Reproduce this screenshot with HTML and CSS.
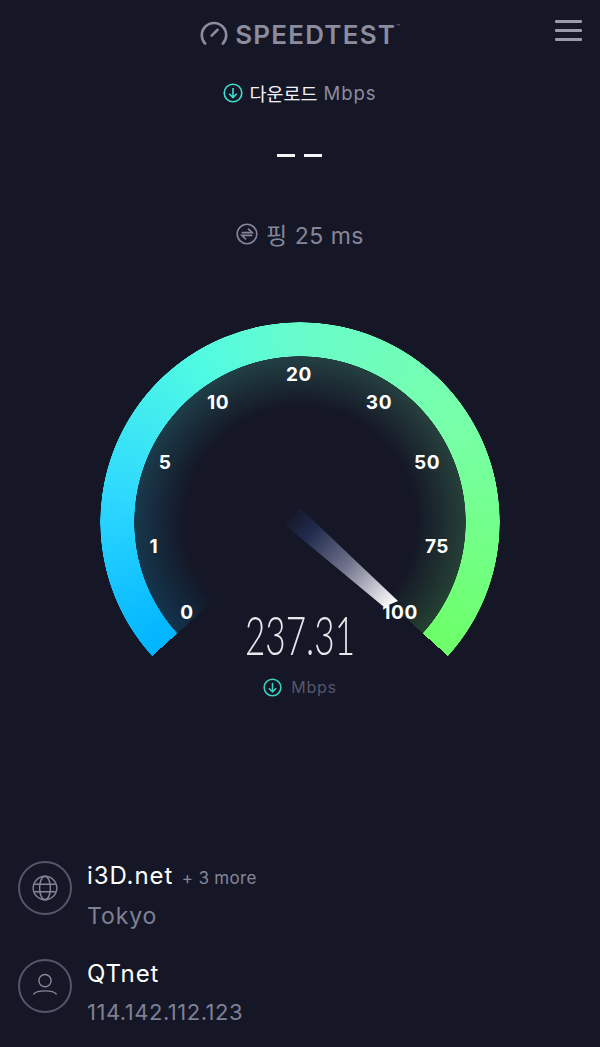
FILE: index.html
```html
<!DOCTYPE html>
<html lang="ko">

<head>
    <meta charset="UTF-8">
    <meta name="viewport" content="width=device-width, initial-scale=1.0">
    <title>Speedtest</title>
    <link rel="stylesheet" href="styles.css">
</head>

<body>

    <!-- Top bar -->
    <header class="topbar">
        <div class="logo">
            <svg class="logo-icon" viewBox="0 0 28 24" width="28" height="24">
                <path d="M5.2 22.6 A12.2 12.2 0 1 1 22.8 22.6" fill="none" stroke="#8b8c9e" stroke-width="2.6" stroke-linecap="round" />
                <path d="M11.6 14.6 L17.6 8.8" fill="none" stroke="#8b8c9e" stroke-width="2.6" stroke-linecap="round" />
            </svg>
            <span class="logo-text">SPEEDTEST</span><span class="logo-tm">™</span>
        </div>
        <div class="menu">
            <span></span>
            <span></span>
            <span></span>
        </div>
    </header>

    <!-- Download value -->
    <div class="result-label">
        <svg viewBox="0 0 20 20" width="20" height="20">
            <circle cx="10" cy="10" r="8.8" fill="none" stroke="#3fe0d0" stroke-width="1.6" />
            <path d="M10 5 V14.4 M6.2 10.8 L10 14.6 L13.8 10.8" fill="none" stroke="#3fe0d0" stroke-width="1.6" />
        </svg>
        <span class="label-white">다운로드</span>
        <span class="label-grey">Mbps</span>
    </div>
    <div class="dashes">
        <span></span>
        <span></span>
    </div>

    <!-- Ping -->
    <div class="ping">
        <svg viewBox="0 0 22 22" width="22" height="22">
            <circle cx="11" cy="11" r="9.8" fill="none" stroke="#85869a" stroke-width="1.6" />
            <path d="M5.6 9.6 H16.2 L12 5.6 M16.4 12.4 H5.8 L10 16.4" fill="none" stroke="#85869a" stroke-width="1.6" />
        </svg>
        <span>핑 25 ms</span>
    </div>

    <!-- Gauge -->
    <div class="gauge">
        <div class="gauge-glow"></div>
        <div class="gauge-arc"></div>
        <svg class="needle" viewBox="0 0 400 400" width="400" height="400">
            <defs>
                <linearGradient id="needleFill" gradientUnits="userSpaceOnUse" x1="190" y1="192" x2="292" y2="284">
                    <stop offset="0" stop-color="#1e2848" stop-opacity="0.1" />
                    <stop offset="0.2" stop-color="#202a4c" />
                    <stop offset="0.55" stop-color="#6d7088" />
                    <stop offset="1" stop-color="#ffffff" />
                </linearGradient>
            </defs>
            <polygon points="185,203 200,186 298,279 284,285" fill="url(#needleFill)" />
        </svg>
        <span class="tick tick-0">0</span>
        <span class="tick tick-1">1</span>
        <span class="tick tick-5">5</span>
        <span class="tick tick-10">10</span>
        <span class="tick tick-20">20</span>
        <span class="tick tick-30">30</span>
        <span class="tick tick-50">50</span>
        <span class="tick tick-75">75</span>
        <span class="tick tick-100">100</span>
        <div class="reading">237.31</div>
        <div class="reading-unit">
            <svg viewBox="0 0 20 20" width="19" height="19">
                <circle cx="10" cy="10" r="8.8" fill="none" stroke="#3fd0c4" stroke-width="1.6" />
                <path d="M10 5 V14.4 M6.2 10.8 L10 14.6 L13.8 10.8" fill="none" stroke="#3fd0c4" stroke-width="1.6" />
            </svg>
            <span>Mbps</span>
        </div>
    </div>

    <!-- Server and provider -->
    <section class="info">
        <div class="info-row">
            <div class="info-icon">
                <svg viewBox="0 0 26 26" width="26" height="26">
                    <circle cx="13" cy="13" r="11.8" fill="none" stroke="#85869a" stroke-width="1.4" />
                    <ellipse cx="13" cy="13" rx="5.4" ry="11.8" fill="none" stroke="#85869a" stroke-width="1.4" />
                    <path d="M2.4 9.2 H23.6 M2.4 16.8 H23.6" fill="none" stroke="#85869a" stroke-width="1.4" />
                </svg>
            </div>
            <div class="info-text">
                <div class="info-title">i3D.net <small>+ 3 more</small></div>
                <div class="info-sub">Tokyo</div>
            </div>
        </div>
        <div class="info-row">
            <div class="info-icon">
                <svg viewBox="0 0 26 26" width="26" height="26">
                    <circle cx="13" cy="7.6" r="6.1" fill="none" stroke="#85869a" stroke-width="1.4" />
                    <path d="M1.8 21 C5 16.8 21 16.8 24.2 21" fill="none" stroke="#85869a" stroke-width="1.4" stroke-linecap="round" />
                </svg>
            </div>
            <div class="info-text">
                <div class="info-title">QTnet</div>
                <div class="info-sub info-ip">114.142.112.123</div>
            </div>
        </div>
    </section>

</body>

</html>
```

FILE: styles.css
```css
body {
    font-family: Inter, "Noto Sans CJK KR", sans-serif;
    background-color: #151726;
    margin: 0;
    height: 1047px;
    overflow: hidden;
    display: flex;
    flex-direction: column;
    align-items: center;
}

.topbar {
    align-self: stretch;
    height: 68px;
    position: relative;
    display: flex;
    justify-content: center;
    padding-top: 20px;
    box-sizing: border-box;
}

.logo {
    display: flex;
    align-items: flex-start;
    color: #8b8c9e;
    height: 28px;
}

.logo-icon {
    margin: 1px 7px 0 0;
}

.logo-text {
    font-size: 26px;
    line-height: 30px;
    font-weight: 600;
    letter-spacing: 1.2px;
}

.logo-tm {
    font-size: 6px;
    line-height: 14px;
}

.menu {
    position: absolute;
    top: 20px;
    right: 18px;
    width: 27px;
    display: flex;
    flex-direction: column;
    gap: 6px;
}

.menu span {
    height: 3px;
    background-color: #9a9aa8;
    border-radius: 1px;
}

.result-label {
    display: flex;
    align-items: center;
    gap: 6px;
    height: 50px;
    font-size: 18.5px;
}

.label-white {
    color: #f2f2f5;
}

.label-grey {
    color: #8b8c9e;
    letter-spacing: 1px;
}

.dashes {
    display: flex;
    gap: 9px;
    margin: 36px 2px 0 0;
    height: 3px;
}

.dashes span {
    width: 18px;
    height: 3px;
    background-color: #f5f5f7;
}

.ping {
    display: flex;
    align-items: center;
    gap: 8px;
    margin-top: 62px;
    height: 30px;
    font-size: 23px;
    letter-spacing: 0.5px;
    color: #85869a;
}

.gauge {
    position: relative;
    width: 400px;
    height: 400px;
    margin-top: 73px;
}

.gauge-arc,
.gauge-glow {
    position: absolute;
    inset: 0;
    border-radius: 50%;
    background: conic-gradient(from 227.8deg,
            #00b4ff 0deg,
            #2ed8ff 50deg,
            #50fbe2 100deg,
            #68fccb 132deg,
            #78ffa9 190deg,
            #6dff68 264.4deg,
            transparent 264.4deg);
}

.gauge-arc {
    -webkit-mask: radial-gradient(circle closest-side, transparent 165.5px, #000 166px, #000 199.5px, transparent 200px);
    mask: radial-gradient(circle closest-side, transparent 165.5px, #000 166px, #000 199.5px, transparent 200px);
}

.gauge-glow {
    -webkit-mask: radial-gradient(circle closest-side, transparent 115px, rgba(0, 0, 0, 0.18) 166px, transparent 166.5px);
    mask: radial-gradient(circle closest-side, transparent 115px, rgba(0, 0, 0, 0.18) 166px, transparent 166.5px);
}

.needle {
    position: absolute;
    top: 0;
    left: 0;
}

.tick {
    position: absolute;
    width: 50px;
    margin-left: -25px;
    text-align: center;
    color: #fff;
    font-size: 19px;
    line-height: 20px;
    font-weight: 700;
    letter-spacing: 0.6px;
}

.tick-0 { left: 87px; top: 281px; }
.tick-1 { left: 54px; top: 215px; }
.tick-5 { left: 65px; top: 131px; }
.tick-10 { left: 118px; top: 71px; }
.tick-20 { left: 199px; top: 43px; }
.tick-30 { left: 279px; top: 71px; }
.tick-50 { left: 327px; top: 131px; }
.tick-75 { left: 337px; top: 215px; }
.tick-100 { left: 300px; top: 281px; }

.reading {
    position: absolute;
    left: 100px;
    width: 200px;
    top: 278px;
    text-align: center;
    color: #e8e8ec;
    font-family: Lato, sans-serif;
    font-size: 54px;
    line-height: 70px;
    font-weight: 300;
    transform: scaleX(0.65);
}

.reading-unit {
    position: absolute;
    left: 0;
    right: 0;
    top: 355px;
    display: flex;
    justify-content: center;
    align-items: center;
    gap: 9px;
    color: #55566a;
    font-size: 16px;
    letter-spacing: 0.7px;
}

.info {
    align-self: stretch;
    display: flex;
    flex-direction: column;
    gap: 26px;
    padding: 137px 0 0 18px;
}

.info-row {
    display: flex;
    gap: 15px;
    height: 72px;
}

.info-icon {
    width: 54px;
    height: 54px;
    margin-top: 2px;
    box-sizing: border-box;
    border: 2px solid #55566a;
    border-radius: 50%;
    display: flex;
    align-items: center;
    justify-content: center;
}

.info-title {
    color: #fff;
    font-size: 24px;
    line-height: 34px;
    letter-spacing: 0.9px;
}

.info-title small {
    color: #85869a;
    font-size: 17px;
    margin-left: 1px;
    letter-spacing: 0.3px;
}

.info-sub {
    color: #7f8094;
    font-size: 23px;
    line-height: 42px;
    letter-spacing: 0.9px;
}

.info-ip {
    font-size: 22px;
    letter-spacing: 0.5px;
}
```
